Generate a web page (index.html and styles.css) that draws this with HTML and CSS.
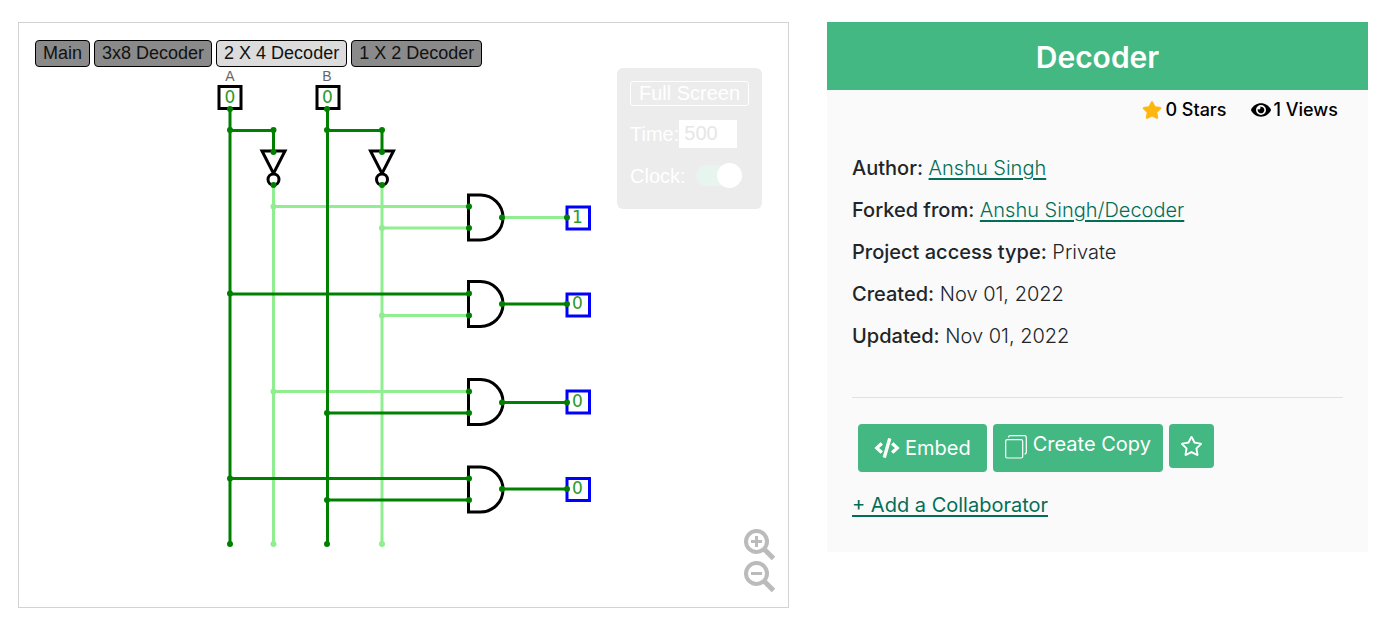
FILE: index.html
```html
<!DOCTYPE html>
<html lang="en">
<head>
<meta charset="utf-8">
<meta name="viewport" content="width=device-width, initial-scale=1">
<title>Decoder</title>
<link rel="stylesheet" href="styles.css">
</head>
<body>
<main class="project">
  <section class="viewer" aria-label="Circuit">
    <svg class="circuit" viewBox="19 23 769 584" role="img" aria-label="2 to 4 decoder circuit">
      <defs>
        <path id="and" d="M0 -22.5H12A22.5 22.5 0 0 1 12 22.5H0Z"/>
        <g id="not"><path d="M-11.5 0H11.5L0 22.500Z"/><circle cy="28.500" r="5.500"/></g>
      </defs>
      <g class="part">
        <rect x="219" y="86.500" width="22" height="22"/>
        <rect x="317" y="86.500" width="22" height="22"/>
        <use href="#not" x="273.500" y="151"/>
        <use href="#not" x="382" y="151"/>
        <use href="#and" x="468.500" y="217.500"/>
        <use href="#and" x="468.500" y="304"/>
        <use href="#and" x="468.500" y="402"/>
        <use href="#and" x="468.500" y="489.500"/>
      </g>
      <g class="output">
        <rect x="567" y="207" width="22.500" height="22"/>
        <rect x="567" y="294" width="22.500" height="22"/>
        <rect x="567" y="391" width="22.500" height="22"/>
        <rect x="567" y="478.500" width="22.500" height="22"/>
      </g>
      <path class="wire high" d="M273.500 186V544M382 186V544M273.500 206.500H468M382 228H468M502 217.500H567M382 315.500H468M273.500 391.500H468"/>
      <path class="wire low" d="M230 109V544M327.500 109V544M230 130.500H273.500V151M327.500 130.500H382V151M230 294H468M502 304H567M327.500 413H468M502 402.500H567M230 478.500H468M327.500 500H468M502 489H567"/>
      <path class="node high" d="M273.500 206.500h0M382 228h0M382 315.500h0M273.500 391.500h0M273.500 544h0M382 544h0"/>
      <path class="node low" d="M230 109h0M327 109h0M230 130h0M327 130h0M273.500 130h0M382 130h0M273.500 152h0M382 152h0M273.500 185h0M382 185h0M230 293.500h0M230 478.500h0M327 413h0M327 500h0M230 544h0M327 544h0M469 206.500h0M469 228h0M502 217.500h0M567 217.500h0M469 293.500h0M469 315.500h0M502 304h0M567 304h0M469 391.500h0M469 413h0M502 402.500h0M567 402.500h0M469 478.500h0M469 500h0M502 489h0M567 489h0"/>
      <g class="name"><text x="230" y="81">A</text><text x="327" y="81">B</text></g>
      <g class="value">
        <text x="230" y="103">0</text><text x="327.500" y="103">0</text>
        <text x="577.500" y="223">1</text><text x="577.500" y="309">0</text>
        <text x="577.500" y="407">0</text><text x="577.500" y="494">0</text>
      </g>
    </svg>
    <nav class="tabs" aria-label="Circuits">
      <button class="tab">Main</button>
      <button class="tab">3x8 Decoder</button>
      <button class="tab active">2 X 4 Decoder</button>
      <button class="tab">1 X 2 Decoder</button>
    </nav>
    <div class="controls">
      <button class="fullscreen">Full Screen</button>
      <div class="row"><label for="time">Time:</label><input class="time" id="time" type="text" value="500"></div>
      <div class="row"><label for="clock">Clock:</label><input class="switch" id="clock" type="checkbox" checked></div>
    </div>
    <div class="zoom">
      <button class="zoom-button" aria-label="Zoom in"><svg viewBox="0 0 32 32"><circle cx="12.500" cy="12.500" r="10.500"/><path class="handle" d="M20.500 20.500L29.500 29.500"/><path class="sign" d="M7 12.500H18M12.500 7V18"/></svg></button>
      <button class="zoom-button" aria-label="Zoom out"><svg viewBox="0 0 32 32"><circle cx="12.500" cy="12.500" r="10.500"/><path class="handle" d="M20.500 20.500L29.500 29.500"/><path class="sign" d="M7 12.500H18"/></svg></button>
    </div>
  </section>

  <aside class="card">
    <h1 class="title">Decoder</h1>
    <div class="stats">
      <span class="stat"><svg class="icon star" viewBox="0 0 576 512"><path d="M259.300 17.800L194 150.200 47.900 171.500c-26.200 3.800-36.700 36.100-17.700 54.600l105.700 103-25 145.500c-4.500 26.300 23.200 46 46.400 33.700L288 439.600l130.700 68.700c23.200 12.200 50.900-7.400 46.400-33.700l-25-145.500 105.700-103c19-18.500 8.500-50.800-17.700-54.600L382 150.200 316.700 17.800c-11.700-23.600-45.600-23.900-57.400 0z"/></svg>0 Stars</span>
      <span class="stat"><svg class="icon" viewBox="0 0 576 512"><path d="M572.520 241.400C518.290 135.590 410.930 64 288 64S57.680 135.640 3.480 241.410a32.350 32.350 0 0 0 0 29.190C57.710 376.410 165.070 448 288 448s230.320-71.640 284.520-177.410a32.350 32.350 0 0 0 0-29.190zM288 400a144 144 0 1 1 144-144 143.930 143.930 0 0 1-144 144zm0-240a95.310 95.310 0 0 0-25.310 3.790 47.850 47.850 0 0 1-66.900 66.900A95.780 95.780 0 1 0 288 160z"/></svg>1 Views</span>
    </div>
    <div class="details">
      <p class="detail"><b>Author:</b> <a href="#">Anshu Singh</a></p>
      <p class="detail"><b>Forked from:</b> <a href="#">Anshu Singh/Decoder</a></p>
      <p class="detail"><b>Project access type:</b> Private</p>
      <p class="detail"><b>Created:</b> Nov 01, 2022</p>
      <p class="detail"><b>Updated:</b> Nov 01, 2022</p>
    </div>
    <div class="actions">
      <button class="action embed"><svg viewBox="0 0 640 512"><path d="M278.900 511.500l-61-17.700c-6.400-1.800-10-8.500-8.200-14.900L346.200 8.700c1.800-6.400 8.500-10 14.900-8.200l61 17.700c6.400 1.800 10 8.500 8.200 14.900L293.800 503.300c-1.900 6.400-8.500 10.100-14.900 8.200zm-114-112.200l43.500-46.400c4.600-4.900 4.300-12.700-.8-17.200L117 256l90.600-79.700c5.100-4.500 5.500-12.300.8-17.200l-43.500-46.400c-4.500-4.800-12.100-5.100-17-.5L3.800 247.200c-5.100 4.700-5.100 12.800 0 17.500l144.100 135.100c4.900 4.600 12.500 4.400 17-.5zm327.200.6l144.100-135.100c5.100-4.700 5.100-12.800 0-17.500L492.100 112.100c-4.800-4.500-12.400-4.300-17 .5L431.600 159c-4.600 4.900-4.300 12.700.8 17.200L523 256l-90.600 79.700c-5.100 4.500-5.500 12.300-.8 17.200l43.500 46.400c4.500 4.900 12.100 5.100 17 .6z"/></svg>Embed</button>
      <button class="action copy"><svg viewBox="0 0 22 24"><rect x=".7" y="4.700" width="17" height="18.300" rx="1.500"/><path d="M3.500 2.500Q3.500 .7 5.500 .7H19.500Q21.300 .7 21.300 2.500V17Q21.300 19 19.500 19"/></svg>Create Copy</button>
      <button class="action favourite" aria-label="Star"><svg viewBox="0 0 576 512"><path d="M528.100 171.500L382 150.200 316.700 17.800c-11.700-23.600-45.600-23.900-57.400 0L194 150.200 47.900 171.500c-26.200 3.800-36.700 36.100-17.700 54.600l105.700 103-25 145.500c-4.500 26.300 23.200 46 46.400 33.700L288 439.600l130.700 68.700c23.200 12.200 50.900-7.400 46.400-33.700l-25-145.500 105.700-103c19-18.500 8.500-50.800-17.700-54.600zM388.600 312.300l23.700 138.400L288 385.400l-124.300 65.300 23.700-138.400-100.600-98 139-20.200 62.200-126 62.200 126 139 20.200-100.600 98z"/></svg></button>
    </div>
    <a class="collaborator" href="#">+ Add a Collaborator</a>
  </aside>
</main>
</body>
</html>
```
FILE: styles.css
```css
* { box-sizing: border-box; }
body {
  margin: 0;
  background: #fff;
  color: #212529;
  font-family: Inter, "Liberation Sans", sans-serif;
  font-size: 20px;
  font-weight: 300;
  line-height: 30px;
}
button, input { font: inherit; margin: 0; }
.project {
  display: grid;
  grid-template-columns: 771fr 541fr;
  gap: 38px;
  align-items: start;
  padding: 22px 18px;
}

.viewer {
  position: relative;
  border: 1px solid #d3d3d3;
  font-family: "Liberation Sans", Arial, sans-serif;
  font-weight: 400;
}
.circuit { display: block; width: 100%; height: auto; }
.part { fill: #fff; stroke: #000; stroke-width: 3; }
.output { fill: #fff; stroke: #00f; stroke-width: 3; }
.wire { fill: none; stroke-width: 3; }
.node { fill: none; stroke-width: 6; stroke-linecap: round; }
.high { stroke: #90ee90; }
.low { stroke: #008000; }
.name { font-size: 14px; fill: #666; text-anchor: middle; }
.value {
  font-family: "DejaVu Sans", sans-serif;
  font-size: 17px;
  fill: #2a9a2a;
  text-anchor: middle;
}

.tabs { position: absolute; top: 17px; left: 16px; display: flex; gap: 4px; }
.tab {
  padding: 0 7px;
  border: 1px solid #000;
  border-radius: 4px;
  background: #8a8a8a;
  color: #111;
  font-size: 18px;
  line-height: 25px;
}
.tab.active { background: #dcdcdc; }

.controls {
  position: absolute;
  top: 45px;
  right: 26px;
  width: 145px;
  padding: 13px 13px 19px;
  border-radius: 6px;
  background: #ececec;
  color: #fff;
  line-height: 24px;
}
.fullscreen {
  display: block;
  width: 100%;
  padding: 0;
  border: 1px solid #fff;
  border-radius: 3px;
  background: none;
  color: #fff;
  line-height: 23px;
}
.row { display: flex; align-items: center; margin-top: 13px; height: 29px; }
.time {
  width: 58px;
  height: 28px;
  padding: 0 5px;
  border: 0;
  background: #fff;
  color: #e6e6e6;
}
.switch {
  appearance: none;
  display: flex;
  align-items: center;
  justify-content: flex-end;
  width: 46px;
  height: 21px;
  margin-left: 10px;
  border-radius: 11px;
  background: #e8f5ef;
}
.switch::before {
  content: "";
  width: 25px;
  height: 25px;
  flex: none;
  border-radius: 50%;
  background: #fff;
}

.zoom { position: absolute; right: 12px; bottom: 14px; display: grid; }
.zoom-button { padding: 0; border: 0; background: none; }
.zoom-button svg {
  display: block;
  width: 32px;
  height: 32px;
  fill: none;
  stroke: #bbb;
  stroke-width: 4;
}
.zoom-button .handle { stroke-width: 5; }
.zoom-button .sign { stroke-width: 3; }

.card { background: #fafafa; padding-bottom: 32px; }
.title {
  margin: 0;
  padding: 17px 16px 15px;
  background: #43b883;
  color: #fff;
  font-size: 30px;
  font-weight: 600;
  line-height: 36px;
  text-align: center;
}
.stats {
  display: flex;
  justify-content: flex-end;
  gap: 24px;
  padding: 5px 30px 0;
  color: #000;
  font-size: 18px;
  font-weight: 500;
}
.stat { display: flex; align-items: center; gap: 3px; }
.icon { width: 20px; height: 18px; fill: currentColor; }
.star { color: #ffb70f; }
.details { margin: 28px 25px 0; padding-bottom: 46px; border-bottom: 1px solid #dee2e6; }
.detail { margin: 0 0 12px; line-height: 30px; }
.detail:last-child { margin-bottom: 0; }
.detail b { font-weight: 500; }
a { color: #026e57; text-decoration-thickness: 2px; text-underline-offset: 3px; }
.actions { display: flex; align-items: flex-start; gap: 6px; padding: 26px 31px 18px; }
.action {
  display: flex;
  align-items: center;
  border: 0;
  border-radius: 4px;
  background: #43b883;
  color: #fff;
  font-weight: 400;
  line-height: 30px;
  white-space: nowrap;
}
.action svg { fill: currentColor; flex: none; }
.embed { gap: 5px; padding: 9px 16px; }
.embed svg { width: 26px; height: 20px; }
.copy { gap: 6px; padding: 5px 12px 13px; align-items: flex-end; }
.copy svg { width: 22px; height: 24px; fill: none; stroke: currentColor; stroke-width: 1.2; }
.favourite { padding: 12px 11px; }
.favourite svg { width: 23px; height: 20px; }
.collaborator { display: inline-block; margin-left: 25px; font-weight: 400; }
```
